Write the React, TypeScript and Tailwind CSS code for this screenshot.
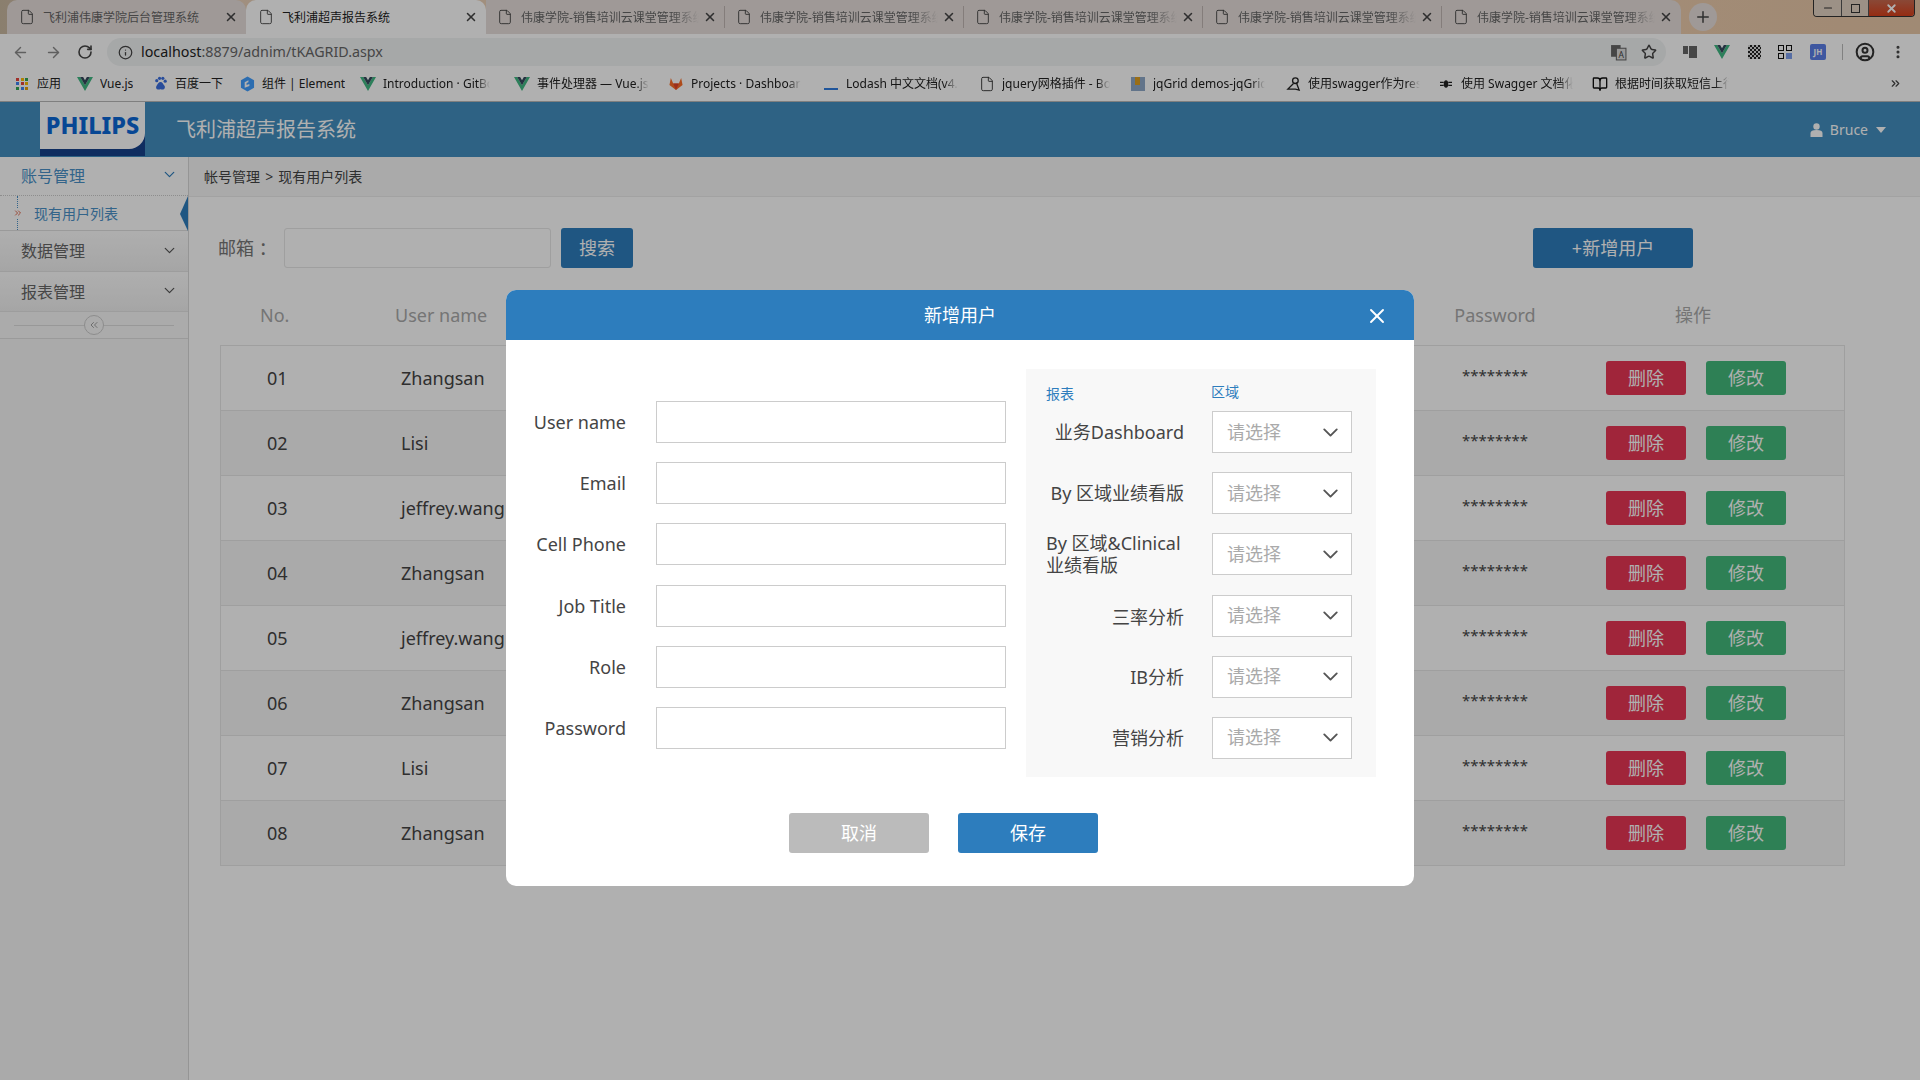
import React from "react";
import { ArrowLeft, ArrowRight, RotateCw, Info, Star, CircleUser, EllipsisVertical, BookOpen, ChevronDown, ChevronsLeft, ChevronsRight, Plus, X, File, Minus } from "lucide-react";

const FONT = "font-['Noto_Sans','Noto_Sans_CJK_SC',sans-serif]";

function VueIcon({ className = "" }: { className?: string }) {
  return (
    <svg viewBox="0 0 24 21" className={className}>
      <path d="M0 0h4.8L12 12.5 19.2 0H24L12 21z" fill="#41b883" />
      <path d="M4.8 0h4.4L12 4.9 14.8 0h4.4L12 12.5z" fill="#35495e" />
    </svg>
  );
}

function Tab({ text, active, first, last }: { text: string; active?: boolean; first?: boolean; last?: boolean }) {
  const box = first
    ? "w-[239px] rounded-t-[10px] bg-[#e6dedb] pl-[12px]"
    : active
      ? "w-[240px] rounded-t-[10px] bg-white pl-[12px]"
      : `w-[239px] bg-[#e6dedb] pl-[11px] ${last ? "rounded-tr-[10px]" : ""}`;
  const inactive = !first && !active;
  return (
    <div className={`relative flex h-[34px] shrink-0 items-center ${box}`}>
      <File className="h-[16px] w-[16px] shrink-0 text-[#444]" strokeWidth={1.4} />
      <span className={`ml-[8px] overflow-hidden pt-[1px] text-[12px] whitespace-nowrap ${active ? "w-[160px] text-[#222]" : "text-[#666]"} ${first ? "w-[160px]" : ""} ${inactive ? "w-[178px] [mask-image:linear-gradient(to_right,black_85%,transparent)]" : ""}`}>{text}</span>
      <X className="absolute right-[8px] top-[10px] h-[14px] w-[14px] text-[#444]" strokeWidth={2.6} />
      {inactive && !last ? <span className="absolute right-0 top-[6px] h-[22px] w-px bg-[#bfb6b2]" /> : null}
    </div>
  );
}

const fade = "[mask-image:linear-gradient(to_right,black_88%,transparent)]";

function Bookmark({ w, icon, text, clip }: { w: number; icon: React.ReactNode; text: string; clip?: number }) {
  return (
    <div className="flex shrink-0 items-center" style={{ width: w }}>
      <div className="flex w-[16px] shrink-0 items-center justify-center">{icon}</div>
      <span className={`ml-[7px] overflow-hidden pt-[1px] text-[12px] whitespace-nowrap text-[#222] ${clip ? fade : ""}`} style={clip ? { width: clip } : undefined}>{text}</span>
    </div>
  );
}

function DocIcon() {
  return <File className="h-[16px] w-[16px] text-[#333]" strokeWidth={1.4} />;
}

function Bookmarks() {
  return (
    <div className="flex h-[36px] items-center border-b border-[#b9b9b9] bg-white pl-[14px]">
      <Bookmark w={63} text="应用" icon={
        <div className="grid grid-cols-3 gap-[1.5px]">
          {["#e8453c","#fbbc05","#34a853","#4285f4","#e8453c","#fbbc05","#34a853","#4285f4","#e8a005"].map((c, i) => <span key={i} className="h-[3px] w-[3px]" style={{ background: c }} />)}
        </div>} />
      <Bookmark w={75} text="Vue.js" icon={<VueIcon className="h-[14px] w-[16px]" />} />
      <Bookmark w={87} text="百度一下" icon={
        <svg viewBox="0 0 16 16" className="h-[15px] w-[15px]" fill="#3a6fe0"><circle cx="4" cy="5" r="1.7"/><circle cx="7" cy="2.5" r="1.7"/><circle cx="10.5" cy="2.5" r="1.7"/><circle cx="13" cy="5.5" r="1.7"/><path d="M8 6.5c2 0 2.5 2 4 3.5s.5 4.5-2 4.5c-1 0-1.300-.5-2-.5s-1 .5-2 .5c-2.500 0-3.500-2.500-2-4.500s2-3.500 4-3.500z"/></svg>} />
      <Bookmark w={121} text="组件 | Element" icon={
        <svg viewBox="0 0 16 16" className="h-[16px] w-[15px]"><path d="M8 0l7 4v8l-7 4-7-4V4z" fill="#409eff"/><path d="M5 6l4-2v2L7 7v2l3-1v2l-5 2z" fill="#fff"/></svg>} />
      <Bookmark w={154} text="Introduction · GitBook" clip={107} icon={<VueIcon className="h-[14px] w-[16px]" />} />
      <Bookmark w={154} text="事件处理器 — Vue.js" clip={112} icon={<VueIcon className="h-[14px] w-[16px]" />} />
      <Bookmark w={155} text="Projects · Dashboard" clip={110} icon={
        <svg viewBox="0 0 16 16" className="h-[15px] w-[16px]"><path d="M8 15L1 9.500 2.500 2 5 8h6l2.500-6L15 9.500z" fill="#fc6d26"/><path d="M8 15L5 8h6z" fill="#e24329"/></svg>} />
      <Bookmark w={156} text="Lodash 中文文档(v4.16)" clip={112} icon={<span className="mt-[10px] h-[2px] w-[14px] bg-[#2f7be0]" />} />
      <Bookmark w={151} text="jquery网格插件 - Bootstrap" clip={108} icon={<DocIcon />} />
      <Bookmark w={155} text="jqGrid demos-jqGrid" clip={112} icon={
        <span className="relative block h-[14px] w-[14px] bg-[#8fa8c8]"><span className="absolute left-[4px] top-0 h-[8px] w-[5px] bg-[#e0a020]" /></span>} />
      <Bookmark w={153} text="使用swagger作为restful" clip={112} icon={
        <svg viewBox="0 0 16 16" className="h-[15px] w-[15px]" fill="none" stroke="#222" strokeWidth="1.4"><circle cx="10" cy="5" r="3"/><path d="M8 8L2 14h8l4 1-3-8"/></svg>} />
      <Bookmark w={154} text="使用 Swagger 文档化" clip={112} icon={
        <svg viewBox="0 0 16 16" className="h-[12px] w-[16px]" fill="#222"><ellipse cx="8" cy="8" rx="3" ry="5"/><path d="M0 5h5v1.500H0zM11 5h5v1.500h-5zM0 9h5v1.500H0zM11 9h5v1.500h-5z"/></svg>} />
      <Bookmark w={297} text="根据时间获取短信上行" clip={114} icon={<BookOpen className="h-[16px] w-[16px] text-[#111]" strokeWidth={2} />} />
      <ChevronsRight className="h-[13px] w-[13px] text-[#444]" strokeWidth={2.2} />
    </div>
  );
}

function Chrome() {
  return (
    <div className="w-full">
      <div className="relative flex h-[34px] bg-[linear-gradient(90deg,#c9b8a0_0%,#e8d0b8_10%,#f0cfb0_70%,#e8c8a8_100%)] pl-[7px]">
        <Tab first text="飞利浦伟康学院后台管理系统" />
        <Tab active text="飞利浦超声报告系统" />
        {Array.from({ length: 5 }).map((_, i) => <Tab key={i} last={i === 4} text="伟康学院-销售培训云课堂管理系统" />)}
        <div className="ml-[8px] mt-[3px] flex h-[28px] w-[28px] items-center justify-center rounded-full bg-[#e6dedb]">
          <Plus className="h-[18px] w-[18px] text-[#444]" strokeWidth={2} />
        </div>
        <div className="absolute right-[5px] top-0 flex h-[17px] w-[102px] overflow-hidden rounded-b-[4px] border border-t-0 border-[#333]">
          <div className="flex w-[28px] items-center justify-center border-r border-[#555] bg-[#e2d2c2]"><Minus className="h-[12px] w-[12px] text-[#333]" strokeWidth={2.4} /></div>
          <div className="flex w-[27px] items-center justify-center border-r border-[#555] bg-[#e2d2c2]"><span className="block h-[9px] w-[9px] border-[1.5px] border-[#333]" /></div>
          <div className="flex flex-1 items-center justify-center bg-[linear-gradient(180deg,#c86a50,#d8401c)]"><X className="h-[13px] w-[13px] text-white" strokeWidth={3.4} /></div>
        </div>
      </div>
      <div className="flex h-[32px] items-center bg-white pt-[4px]">
        <div className="flex w-[107px] shrink-0 items-center pl-[12px]">
          <ArrowLeft className="h-[17px] w-[17px] text-[#8a8a8a]" strokeWidth={2} />
          <ArrowRight className="ml-[16px] h-[17px] w-[17px] text-[#8a8a8a]" strokeWidth={2} />
          <RotateCw className="ml-[15px] h-[16px] w-[16px] text-[#444]" strokeWidth={2.4} />
        </div>
        <div className="flex h-[28px] w-[1559px] items-center rounded-full bg-[#f1f3f4] pl-[11px] pr-[9px]">
          <Info className="h-[15px] w-[15px] text-[#444]" strokeWidth={2} />
          <span className="ml-[8px] text-[14.3px] text-[#666]"><span className="text-[#222]">localhost</span>:8879/adnim/tKAGRID.aspx</span>
          <svg viewBox="0 0 16 16" className="ml-auto mr-[14px] h-[17px] w-[17px]"><rect x="1" y="1" width="9" height="11" fill="#666"/><rect x="6" y="4" width="9" height="11" fill="#ddd" stroke="#666"/><text x="8" y="13" fontSize="8" fill="#444">A</text></svg>
          <Star className="h-[16px] w-[16px] text-[#444]" strokeWidth={2.2} />
        </div>
        <div className="flex flex-1 items-center pl-[17px]">
          <span className="flex h-[12px] w-[14px] gap-[1px]"><span className="h-[8px] w-[5px] bg-[#666]" /><span className="h-[12px] w-[8px] bg-[#666]" /></span>
          <VueIcon className="ml-[17px] h-[14px] w-[16px]" />
          <span className="ml-[18px] block h-[14px] w-[13px] bg-[repeating-conic-gradient(#222_0_25%,#ddd_0_50%)] bg-[length:4px_4px]" />
          <span className="ml-[17px] grid h-[14px] w-[14px] grid-cols-2 gap-[2px]">
            <span className="border border-[#111]" /><span className="border border-[#111]" /><span className="border border-[#111]" /><span className="bg-[#7fa0ee]" />
          </span>
          <span className="ml-[18px] flex h-[16px] w-[16px] items-center justify-center rounded-[2px] bg-[#5a7fe8] text-[8px] font-bold text-white">JH</span>
          <span className="ml-[16px] h-[16px] w-px bg-[#bbb]" />
          <CircleUser className="ml-[12px] h-[20px] w-[20px] text-[#333]" strokeWidth={2.4} />
          <EllipsisVertical className="ml-[15px] h-[16px] w-[16px] text-[#444]" strokeWidth={2.6} />
        </div>
      </div>
      <Bookmarks />
    </div>
  );
}

function Header() {
  return (
    <div className="flex h-[55px] items-start bg-[#438fbf] pl-[40px]">
      <div className="relative h-[54px] w-[105px] overflow-hidden bg-[#17428c]">
        <div className="flex h-[47px] items-center justify-center rounded-br-[16px] bg-white pt-[1px] text-[23.5px] font-extrabold text-[#0b68d7] font-['Noto_Sans',sans-serif]">PHILIPS</div>
      </div>
      <div className="ml-[31px] self-center text-[20px] text-white">飞利浦超声报告系统</div>
      <div className="ml-auto mr-[34px] flex items-center self-center text-[14px] text-white">
        <svg viewBox="0 0 12 14" className="h-[14px] w-[13px]" fill="#fff"><circle cx="6" cy="3.500" r="3.200"/><path d="M0 14V10c0-2 2-3 6-3s6 1 6 3v4z"/></svg>
        <span className="ml-[7px]">Bruce</span>
        <span className="ml-[8px] h-0 w-0 border-x-[5px] border-t-[6px] border-x-transparent border-t-white" />
      </div>
    </div>
  );
}

function SideItem({ text, h }: { text: string; h: number }) {
  return (
    <div className="flex items-center justify-between border-b border-[#e4e4e4] bg-[linear-gradient(180deg,#fdfdfd,#f0f0f0)] pl-[21px] pr-[10px]" style={{ height: h }}>
      <span className="text-[16px] text-[#666]">{text}</span>
      <ChevronDown className="mt-[-2px] h-[17px] w-[17px] text-[#555]" strokeWidth={1.7} />
    </div>
  );
}

function Sidebar() {
  return (
    <div className="w-[189px] shrink-0 border-r border-[#d8d8d8] bg-[#f6f6f6]">
      <div className="flex h-[39px] items-center justify-between border-b border-dotted border-[#ccc] bg-white pl-[21px] pr-[10px]">
        <span className="text-[16px] text-[#4a91c8]">账号管理</span>
        <ChevronDown className="mt-[-3px] h-[17px] w-[17px] text-[#2d7dbd]" strokeWidth={1.7} />
      </div>
      <div className="relative flex h-[35px] items-center border-b border-[#e0e0e0] bg-white pl-[34px]">
        <span className="absolute left-[17px] top-0 h-full border-l border-dotted border-[#4a91c8]" />
        <ChevronsRight className="absolute left-[13px] top-[12px] h-[10px] w-[10px] bg-white text-[#e06a50]" strokeWidth={2.4} />
        <span className="text-[14px] text-[#4a91c8]">现有用户列表</span>
        <svg viewBox="0 0 8 35" className="absolute right-0 top-0 h-[35px] w-[8px]" preserveAspectRatio="none"><path d="M8 0L0 18l8 17z" fill="#2d7dbd" /></svg>
      </div>
      <SideItem text="数据管理" h={41} />
      <SideItem text="报表管理" h={40} />
      <div className="relative flex h-[27px] items-center justify-center border-b border-[#e0e0e0] bg-[#f8f8f8]">
        <span className="mx-[14px] h-px w-full bg-[#ddd]" />
        <span className="absolute left-[84px] top-[3px] flex h-[20px] w-[20px] items-center justify-center rounded-full border border-[#ccc] bg-[#f8f8f8]">
          <ChevronsLeft className="h-[12px] w-[12px] text-[#888]" strokeWidth={1.6} />
        </span>
      </div>
    </div>
  );
}

const rows = ["Zhangsan", "Lisi", "jeffrey.wang", "Zhangsan", "jeffrey.wang", "Zhangsan", "Lisi", "Zhangsan"];
const cols = "grid-cols-[115px_1048px_222px_1fr]";

function Table() {
  return (
    <div className="ml-[31px] mr-[75px] mt-[30px]">
      <div className={`grid h-[47px] ${cols} items-start text-[18px] text-[#aaa]`}>
        <span className="pl-[40px] pt-[4px]">No.</span>
        <span className="pl-[60px] pt-[4px]">User name</span>
        <span className="pl-[2px] pt-[4px] text-center">Password</span>
        <span className="pl-[70px] pt-[4px]">操作</span>
      </div>
      <div className="border border-b-0 border-[#e6e6e6]">
        {rows.map((n, i) => (
          <div key={i} className={`grid h-[65px] ${cols} items-center border-b border-[#e6e6e6] text-[18px] text-[#444] ${i % 2 ? "bg-[#f7f7f7]" : "bg-white"}`}>
            <span className="pl-[46px]">{`0${i + 1}`}</span>
            <span className="pl-[65px]">{n}</span>
            <span className="mb-[5px] text-center text-[15px]">********</span>
            <div className="flex gap-[20px]">
              <button className="h-[34px] w-[80px] rounded-[3px] bg-[#e83654] text-[18px] text-white">删除</button>
              <button className="h-[34px] w-[80px] rounded-[3px] bg-[#43ba7b] text-[18px] text-white">修改</button>
            </div>
          </div>
        ))}
      </div>
    </div>
  );
}

function Content() {
  return (
    <div className="flex-1">
      <div className="flex h-[40px] items-center border-b border-[#ebebeb] bg-[#f7f7f7] pl-[15px] text-[14px] text-[#444] [word-spacing:1.5px]">帐号管理 &gt; 现有用户列表</div>
      <div className="mt-[31px] flex h-[40px] items-center pl-[29px] pr-[227px]">
        <span className="w-[66px] text-[18px] text-[#777]">邮箱 ：</span>
        <div className="h-[40px] w-[267px] rounded-[3px] border border-[#e6e6e6] bg-white" />
        <button className="ml-[10px] h-[40px] w-[72px] rounded-[3px] bg-[#2d7dbd] text-[18px] text-white">搜索</button>
        <button className="ml-auto h-[40px] w-[160px] rounded-[3px] bg-[#2d7dbd] text-[18px] text-white">+新增用户</button>
      </div>
      <Table />
    </div>
  );
}

const leftFields = ["User name", "Email", "Cell Phone", "Job Title", "Role", "Password"];
const rightFields = [
  { t: "业务Dashboard", cls: "text-right pb-[1px]" },
  { t: "By 区域业绩看版", cls: "text-right pb-[1px]" },
  { t: "By 区域&Clinical 业绩看版", cls: "text-left pb-[1px]" },
  { t: "三率分析", cls: "text-right pt-[2px]" },
  { t: "IB分析", cls: "text-right pt-[1px]" },
  { t: "营销分析", cls: "text-right pt-[1px]" },
];

function Modal() {
  return (
    <div className="absolute inset-0 bg-[rgba(0,0,0,0.31)]">
      <div className="ml-[506px] mt-[290px] h-[596px] w-[908px] overflow-hidden rounded-[10px] bg-white">
        <div className="relative flex h-[50px] items-center justify-center bg-[#2d7dbd] text-[18px] text-white">
          新增用户
          <X className="absolute right-[25px] top-[14px] h-[24px] w-[24px]" strokeWidth={1.9} />
        </div>
        <div className="flex items-start">
          <div className="mt-[61px] flex w-[500px] shrink-0 flex-col gap-[19.2px]">
            {leftFields.map((f) => (
              <div key={f} className="flex h-[42px] items-center">
                <label className="w-[120px] pt-[1px] text-right text-[18px] text-[#444]">{f}</label>
                <div className="ml-[30px] h-[42px] w-[350px] border border-[#ccc] bg-white" />
              </div>
            ))}
          </div>
          <div className="ml-[20px] mt-[29px] h-[408px] w-[350px] bg-[#f8f8f8] pl-[20px] pt-[13px]">
            <div className="flex h-[29px] items-start text-[14px] text-[#2d7dbd]">
              <span className="mt-[1px] w-[165px]">报表</span>
              <span className="-mt-[1px]">区域</span>
            </div>
            <div className="flex flex-col gap-[19.2px]">
              {rightFields.map((f) => (
                <div key={f.t} className="flex h-[42px] items-center">
                  <label className={`w-[138px] text-[18px] leading-[22px] text-[#444] ${f.cls}`}>{f.t}</label>
                  <div className="ml-[28px] flex h-[42px] w-[140px] items-center justify-between border border-[#ccc] bg-white pl-[14px] pr-[8px]">
                    <span className="text-[18px] text-[#aaa]">请选择</span>
                    <ChevronDown className="h-[25px] w-[25px] text-[#555]" strokeWidth={1.8} />
                  </div>
                </div>
              ))}
            </div>
          </div>
        </div>
        <div className="mt-[36px] flex gap-[29px] pl-[283px]">
          <button className="h-[40px] w-[140px] rounded-[3px] bg-[#bbbbbb] text-[18px] text-white">取消</button>
          <button className="h-[40px] w-[140px] rounded-[3px] bg-[#2d7dbd] text-[18px] text-white">保存</button>
        </div>
      </div>
    </div>
  );
}

export default function App() {
  return (
    <div className={`relative h-[1080px] w-[1920px] overflow-hidden bg-white ${FONT}`}>
      <Chrome />
      <Header />
      <div className="flex h-[923px]">
        <Sidebar />
        <Content />
      </div>
      <Modal />
    </div>
  );
}
